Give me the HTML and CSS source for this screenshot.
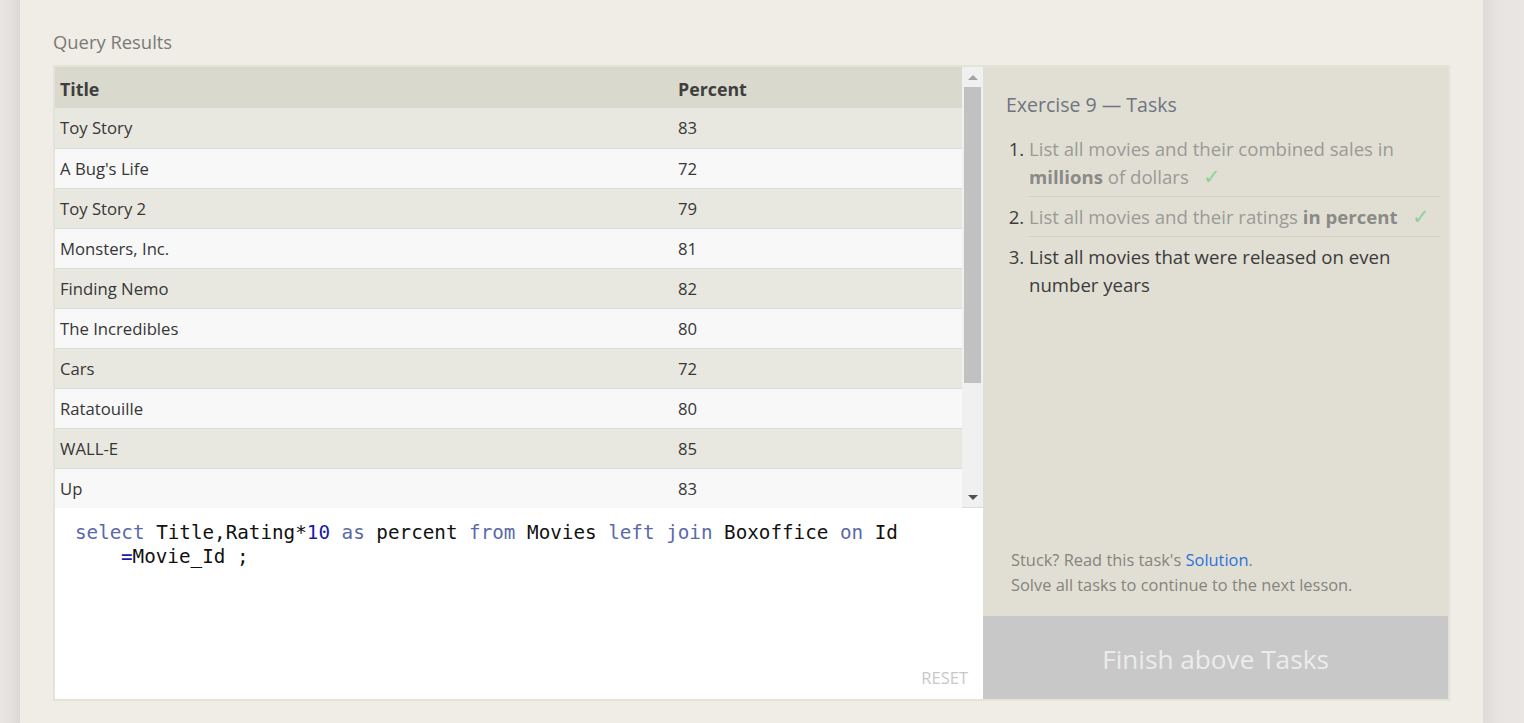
FILE: index.html
```html
<!DOCTYPE html>
<html>
<head>
<meta charset="utf-8">
<link rel="stylesheet" href="styles.css">
</head>
<body>
<div class="page">
  <div class="side side-left"></div>
  <main class="main">
    <h2 class="section-title">Query Results</h2>
    <div class="box">
      <div class="left-col">
        <div class="results">
          <table class="table">
            <thead>
              <tr><th class="col-title">Title</th><th>Percent</th></tr>
            </thead>
            <tbody>
              <tr><td>Toy Story</td><td>83</td></tr>
              <tr><td>A Bug's Life</td><td>72</td></tr>
              <tr><td>Toy Story 2</td><td>79</td></tr>
              <tr><td>Monsters, Inc.</td><td>81</td></tr>
              <tr><td>Finding Nemo</td><td>82</td></tr>
              <tr><td>The Incredibles</td><td>80</td></tr>
              <tr><td>Cars</td><td>72</td></tr>
              <tr><td>Ratatouille</td><td>80</td></tr>
              <tr><td>WALL-E</td><td>85</td></tr>
              <tr><td>Up</td><td>83</td></tr>
            </tbody>
          </table>
          <div class="scrollbar">
            <div class="arrow arrow-up"></div>
            <div class="thumb"></div>
            <div class="track-rest"></div>
            <div class="arrow arrow-down"></div>
          </div>
        </div>
        <div class="editor">
          <div class="code"><div class="code-line"><span class="kw">select</span> Title,Rating*<span class="num">10</span> <span class="kw">as</span> percent <span class="kw">from</span> Movies <span class="kw">left</span> <span class="kw">join</span> Boxoffice <span class="kw">on</span> Id</div><div class="code-line wrapped"><span class="num">=</span>Movie_Id ;</div></div>
          <div class="reset">RESET</div>
        </div>
      </div>
      <aside class="tasks">
        <div class="tasks-top">
          <h3 class="tasks-title">Exercise 9 — Tasks</h3>
          <ol class="task-list">
            <li class="done"><span class="task-text">List all movies and their combined sales in <b>millions</b> of dollars</span><span class="check">✓</span></li>
            <li class="done"><span class="task-text">List all movies and their ratings <b>in percent</b></span><span class="check">✓</span></li>
            <li><span class="task-text current">List all movies that were released on even number years</span></li>
          </ol>
        </div>
        <div class="tasks-bottom">
          <p class="hint">Stuck? Read this task's <a class="link" href="#">Solution</a>.<br>Solve all tasks to continue to the next lesson.</p>
          <div class="finish">Finish above Tasks</div>
        </div>
      </aside>
    </div>
  </main>
  <div class="side side-right"></div>
</div>
</body>
</html>
```

FILE: styles.css
```css
* { box-sizing: border-box; }
html, body { margin: 0; padding: 0; }
body {
  font-family: "Open Sans", "Lato", sans-serif;
  background: #e8e5e2;
  color: #333;
}
.page {
  display: flex;
  height: 723px;
  overflow: hidden;
}
.side-left {
  width: 20px;
  flex: none;
  background: linear-gradient(to right, #e9e6e3, #e4e1de 50%, #dcd8d5);
}
.side-right {
  width: 41px;
  flex: none;
  background: linear-gradient(to right, #dedbd8, #e7e4e1 40%, #e9e6e3);
}
.main {
  flex: 1;
  background: #efede6;
  padding: 31px 33px 0 33px;
}
.section-title {
  margin: 0 0 12px 0;
  font-size: 18.4px;
  line-height: 22px;
  font-weight: 400;
  color: #7a7a76;
}
.box {
  display: flex;
  border: 2px solid #e4e3d9;
  height: 636px;
}
.left-col {
  width: 928px;
  flex: none;
  display: flex;
  flex-direction: column;
}
.results {
  display: flex;
  height: 441px;
}
.table {
  width: 907px;
  border-collapse: collapse;
  table-layout: fixed;
  font-size: 16.7px;
}
.table th {
  background: #dad9cd;
  height: 41px;
  text-align: left;
  font-weight: 700;
  font-size: 17.8px;
  color: #3e3e3e;
  padding: 2px 5px 0;
}
.col-title { width: 618px; }
.table td {
  height: 40px;
  padding: 0 5px;
  color: #363636;
  border-bottom: 1px solid #dcdbd5;
}
.table tbody tr:nth-child(odd) td { background: #e9e8e0; }
.table tbody tr:nth-child(even) td { background: #f8f8f8; }
.scrollbar {
  width: 21px;
  flex: none;
  background: #f0f0f0;
  display: flex;
  flex-direction: column;
  align-items: center;
  border-bottom: 1px solid #dcdbd5;
}
.arrow {
  height: 20px;
  width: 100%;
  display: flex;
  align-items: center;
  justify-content: center;
}
.arrow-up::before {
  content: "";
  border-left: 5px solid transparent;
  border-right: 5px solid transparent;
  border-bottom: 5px solid #a3a3a3;
}
.arrow-down::before {
  content: "";
  border-left: 5px solid transparent;
  border-right: 5px solid transparent;
  border-top: 5px solid #505050;
}
.thumb {
  width: 17px;
  height: 296px;
  background: #c1c1c1;
}
.track-rest { flex: 1; }
.editor {
  flex: 1;
  background: #ffffff;
  display: flex;
  flex-direction: column;
  justify-content: space-between;
  padding: 13px 15px 10px 20px;
}
.code {
  font-family: "DejaVu Sans Mono", "Liberation Mono", monospace;
  font-size: 19.25px;
  line-height: 24px;
  color: #111;
  white-space: pre;
}
.code-line.wrapped { padding-left: 46px; }
.kw { color: #5a6aa8; }
.num { color: #1a1aaa; }
.reset {
  align-self: flex-end;
  font-size: 16.5px;
  line-height: 22px;
  color: #c8c8c8;
}
.tasks {
  flex: 1;
  background: #e1dfd4;
  display: flex;
  flex-direction: column;
  justify-content: space-between;
}
.tasks-top {
  padding: 24px 8px 0 23px;
}
.tasks-title {
  margin: 0 0 10px 0;
  font-size: 19.5px;
  line-height: 28px;
  font-weight: 400;
  color: #6e7580;
}
.task-list {
  margin: 0;
  list-style-position: outside;
  padding-left: 23px;
  font-size: 18.6px;
  line-height: 28px;
}
.task-list li {
  color: #3c3c3c;
  padding: 6px 0 5px 0;
  border-bottom: 1px solid #d4d2c7;
}
.task-list li:last-child { border-bottom: none; }
.task-list li.done .task-text { color: #9a9a96; }
.task-list li.done b { color: #8a8a86; }
.task-text.current { color: #3a3a3a; }
.check {
  color: #8fd09a;
  margin-left: 14px;
  font-size: 21px;
  line-height: 20px;
}
.hint {
  margin: 0 0 19px 28px;
  font-size: 16.4px;
  line-height: 25px;
  color: #86847d;
}
.link { color: #2f6fdc; text-decoration: none; }
.finish {
  height: 83px;
  background: #c8c8c8;
  color: #ececec;
  font-size: 26.2px;
  display: flex;
  align-items: center;
  justify-content: center;
  padding-top: 3px;
}
```
